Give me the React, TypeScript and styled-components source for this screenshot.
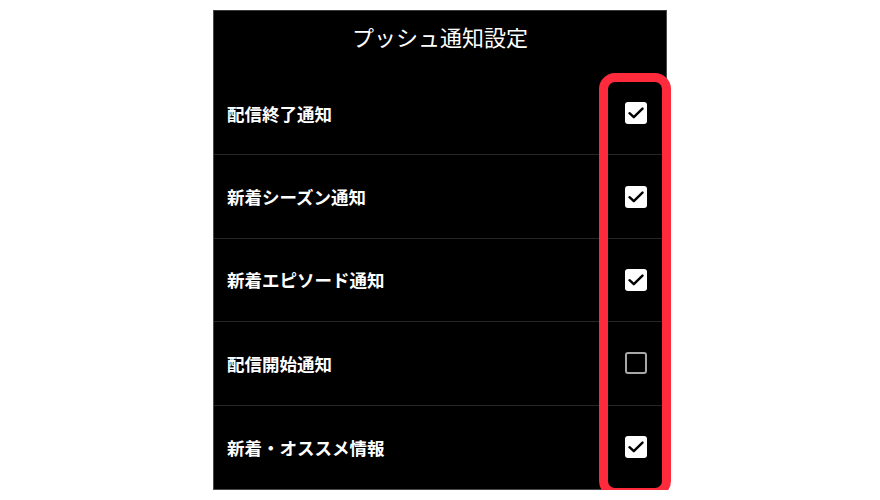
import React from "react";
import styled, { createGlobalStyle } from "styled-components";

const Global = createGlobalStyle`
  html, body { margin: 0; padding: 0; background: #ffffff; }
  body { font-family: "Noto Sans CJK JP", "Noto Sans", sans-serif; }
`;

const Panel = styled.div`
  position: relative;
  width: 454px;
  margin: 10px auto 0;
  background: #000000;
  border: 1px solid #4a4a4a;
  border-top-color: #3a3a3a;
  box-sizing: border-box;
  display: flex;
  flex-direction: column;
`;

const Header = styled.div`
  height: 61px;
  display: flex;
  align-items: center;
  justify-content: center;
  color: #ffffff;
  font-size: 22px;
  font-weight: 400;
  padding-bottom: 12px;
  box-sizing: border-box;
`;

const Row = styled.div<{ $last?: boolean }>`
  height: 83.4px;
  display: flex;
  align-items: center;
  justify-content: space-between;
  padding: 0 19px 0 13px;
  box-sizing: border-box;
  border-bottom: ${(p) => (p.$last ? "none" : "1px solid #262626")};
`;

const Label = styled.span`
  color: #ffffff;
  font-size: 17.5px;
  font-weight: 700;
  letter-spacing: 0;
`;

const Box = styled.div<{ $checked: boolean }>`
  width: 22px;
  height: 22px;
  box-sizing: border-box;
  border-radius: 3px;
  display: flex;
  align-items: center;
  justify-content: center;
  background: ${(p) => (p.$checked ? "#ffffff" : "transparent")};
  border: ${(p) => (p.$checked ? "none" : "2px solid #a8a8a8")};
`;

const Highlight = styled.div`
  position: absolute;
  left: 385px;
  top: 62px;
  width: 72px;
  height: 424px;
  border: 9px solid #ff2b3d;
  border-radius: 16px;
  box-sizing: border-box;
  pointer-events: none;
`;

const Check = () => (
  <svg width="16" height="12" viewBox="0 0 16 12" fill="none">
    <path d="M1.5 6.2 L5.8 10.2 L14.5 1.6" stroke="#000" strokeWidth="2.4" strokeLinecap="round" strokeLinejoin="round" />
  </svg>
);

const items = [
  { label: "配信終了通知", checked: true },
  { label: "新着シーズン通知", checked: true },
  { label: "新着エピソード通知", checked: true },
  { label: "配信開始通知", checked: false },
  { label: "新着・オススメ情報", checked: true },
];

export default function App() {
  return (
    <>
      <Global />
      <Panel>
        <Header>プッシュ通知設定</Header>
        {items.map((it, i) => (
          <Row key={it.label} $last={i === items.length - 1}>
            <Label>{it.label}</Label>
            <Box $checked={it.checked}>{it.checked && <Check />}</Box>
          </Row>
        ))}
        <Highlight />
      </Panel>
    </>
  );
}
